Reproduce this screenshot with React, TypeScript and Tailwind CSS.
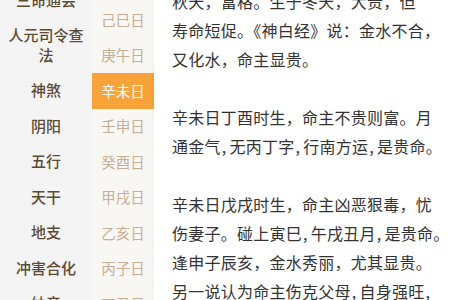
import React from "react";

const leftItems = [
  { t: "三命通会", h: "h-[35.5px]" },
  { t: "人元司令查法", h: "h-[54.5px]" },
  { t: "神煞", h: "h-[35.5px]" },
  { t: "阴阳", h: "h-[35.5px]" },
  { t: "五行", h: "h-[35.5px]" },
  { t: "天干", h: "h-[35.5px]" },
  { t: "地支", h: "h-[35.5px]" },
  { t: "冲害合化", h: "h-[35.5px]" },
  { t: "纳音", h: "h-[35.5px]" },
];

const days = ["己巳日", "庚午日", "辛未日", "壬申日", "癸酉日", "甲戌日", "乙亥日", "丙子日", "丁丑日"];

const paras = [
  ["秋天，富格。生于冬天，大贵，但", "寿命短促。《神白经》说：金水不合，", "又化水，命主显贵。"],
  ["辛未日丁酉时生，命主不贵则富。月", "通金气,无丙丁字,行南方运,是贵命。"],
  [
    "辛未日戊戌时生，命主凶恶狠毒，忧",
    "伤妻子。碰上寅巳,午戌丑月,是贵命。",
    "逢申子辰亥，金水秀丽，尤其显贵。",
    "另一说认为命主伤克父母,自身强旺,",
  ],
];

function Line({ text }: { text: string }) {
  const parts = text.split(",");
  return (
    <div className="whitespace-nowrap">
      {parts.map((p, i) => (
        <React.Fragment key={i}>
          {p}
          {i < parts.length - 1 && <span className="ml-[1px] mr-[3px]">,</span>}
        </React.Fragment>
      ))}
    </div>
  );
}

export default function App() {
  return (
    <div
      className="flex w-[450px] h-[300px] overflow-hidden bg-white"
      style={{ fontFamily: '"Noto Sans CJK SC", "Noto Sans", sans-serif' }}
    >
      <div className="w-[92px] shrink-0 bg-[#f4f4f4]">
        <div className="mt-[-17.5px]">
          {leftItems.map((it) => (
            <div
              key={it.t}
              className={`${it.h} flex items-center justify-center px-[8px] text-center text-[15px] leading-[20px] font-medium text-[#5e4b33]`}
            >
              {it.t}
            </div>
          ))}
        </div>
      </div>
      <div className="w-[62px] shrink-0 bg-[#f9f7f4] pt-[2px]">
        {days.map((d, i) => (
          <div
            key={d}
            className={`h-[35.5px] flex items-center justify-center text-[14.5px] ${
              i === 2 ? "bg-[#f8a23a] text-white" : "text-[#c6ae97]"
            }`}
          >
            {d}
          </div>
        ))}
      </div>
      <div className="flex-1 bg-white pl-[18px] shadow-[-1px_0_3px_rgba(0,0,0,0.05)]">
        <div className="mt-[-13.5px] text-[16px] leading-[29px] tracking-[0.25px] text-[#333333]">
          {paras.map((p, i) => (
            <div key={i} className="mb-[29px]">
              {p.map((l) => (
                <Line key={l} text={l} />
              ))}
            </div>
          ))}
        </div>
      </div>
    </div>
  );
}
